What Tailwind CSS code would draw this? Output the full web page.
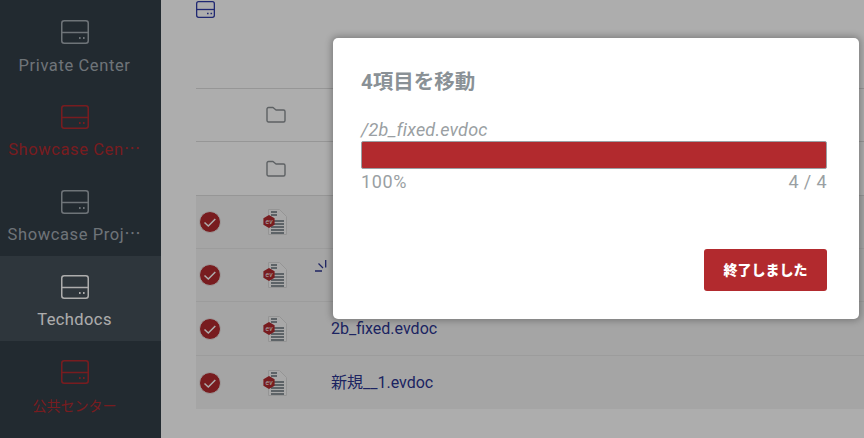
<!DOCTYPE html>
<html lang="ja">
<head>
    <meta charset="UTF-8">
    <title>Techdocs</title>
    <script src="https://cdn.jsdelivr.net/npm/@tailwindcss/browser@4"></script>
</head>
<body class="font-['Roboto','Noto_Sans_CJK_JP',sans-serif] overflow-hidden">

    <div class="relative flex w-[864px] h-[438px] overflow-hidden bg-white">

        <!-- Sidebar -->
        <aside class="w-[161px] h-full shrink-0 pt-px bg-[#333e48] text-[16.5px] tracking-[0.6px] leading-5">
            <div class="h-[85px] flex flex-col items-center pt-[19px] pr-3 text-[#a3abb2]">
                <svg class="w-7 h-6" viewBox="0 0 28 24" fill="none" stroke="currentColor" stroke-width="1.5"><rect x="0.75" y="0.75" width="26.5" height="22.5" rx="2.5"/><path d="M1 12.5h26"/><path d="M18 18h1.6M22 18h1.6" stroke-width="2"/></svg>
                <span class="mt-[12px]">Private Center</span>
            </div>
            <div class="h-[85px] flex flex-col items-center pt-[19px] pr-3 text-[#b22a2e]">
                <svg class="w-7 h-6" viewBox="0 0 28 24" fill="none" stroke="currentColor" stroke-width="1.5"><rect x="0.75" y="0.75" width="26.5" height="22.5" rx="2.5"/><path d="M1 12.5h26"/><path d="M18 18h1.6M22 18h1.6" stroke-width="2"/></svg>
                <span class="mt-[11px] whitespace-nowrap">Showcase Cen⋯</span>
            </div>
            <div class="h-[85px] flex flex-col items-center pt-[19px] pr-3 text-[#a3abb2]">
                <svg class="w-7 h-6" viewBox="0 0 28 24" fill="none" stroke="currentColor" stroke-width="1.5"><rect x="0.75" y="0.75" width="26.5" height="22.5" rx="2.5"/><path d="M1 12.5h26"/><path d="M18 18h1.6M22 18h1.6" stroke-width="2"/></svg>
                <span class="mt-[11px] whitespace-nowrap">Showcase Proj⋯</span>
            </div>
            <div class="h-[85px] flex flex-col items-center pt-[19px] pr-3 bg-[#455059] text-white">
                <svg class="w-7 h-6" viewBox="0 0 28 24" fill="none" stroke="currentColor" stroke-width="1.5"><rect x="0.75" y="0.75" width="26.5" height="22.5" rx="2.5"/><path d="M1 12.5h26"/><path d="M18 18h1.6M22 18h1.6" stroke-width="2"/></svg>
                <span class="mt-[11px] tracking-[0.4px]">Techdocs</span>
            </div>
            <div class="h-[85px] flex flex-col items-center pt-[19px] pr-3 text-[#b22a2e]">
                <svg class="w-7 h-6" viewBox="0 0 28 24" fill="none" stroke="currentColor" stroke-width="1.5"><rect x="0.75" y="0.75" width="26.5" height="22.5" rx="2.5"/><path d="M1 12.5h26"/><path d="M18 18h1.6M22 18h1.6" stroke-width="2"/></svg>
                <span class="mt-[12px] text-[14px] tracking-normal">公共センター</span>
            </div>
        </aside>

        <!-- Main -->
        <main class="flex-1 pl-[35px] text-[16px] text-[#2b3590]">
            <svg class="block w-[19px] h-[17px] mt-px" viewBox="0 0 19 17" fill="none" stroke="#2f3ba8" stroke-width="1.3"><rect x="0.65" y="0.65" width="17.7" height="15.7" rx="2"/><path d="M1 8.5h17"/><path d="M11 12.5h1.6M14.5 12.5h1.6" stroke-width="1.6"/></svg>

            <div class="mt-[70px] border-t border-[#dedede]">
                <div class="h-[53px] flex items-center border-b border-[#dedede]">
                    <svg class="ml-[70px] w-5 h-[18px]" viewBox="0 0 20 18" fill="none" stroke="#8a8f93" stroke-width="1.4" stroke-linejoin="round"><path d="M1 3a1.5 1.5 0 0 1 1.5-1.5h4.5l3 2.5h7.5a1.5 1.5 0 0 1 1.5 1.5v9a1.5 1.5 0 0 1-1.5 1.5h-15a1.5 1.5 0 0 1-1.5-1.5z"/></svg>
                </div>
                <div class="h-[54px] flex items-center border-b border-[#dedede]">
                    <svg class="ml-[70px] w-5 h-[18px]" viewBox="0 0 20 18" fill="none" stroke="#8a8f93" stroke-width="1.4" stroke-linejoin="round"><path d="M1 3a1.5 1.5 0 0 1 1.5-1.5h4.5l3 2.5h7.5a1.5 1.5 0 0 1 1.5 1.5v9a1.5 1.5 0 0 1-1.5 1.5h-15a1.5 1.5 0 0 1-1.5-1.5z"/></svg>
                </div>

                <!-- Selected rows -->
                <div class="bg-[#f4f4f4]">
                    <div class="h-[53px] flex items-center border-b border-[#e6e6e6]">
                        <svg class="ml-[3px] w-[22px] h-[22px]" viewBox="0 0 22 22"><circle cx="11" cy="11" r="10.5" fill="#b22a2e" stroke="#e8e8e8" stroke-width="1"/><path d="M5.5 11.5l3.8 3.5 7-7" fill="none" stroke="#fff" stroke-width="1.5"/></svg>
                        <svg class="ml-[42px] w-[24px] h-[26px]" viewBox="0 0 24 26"><path d="M5.5 0.5h11l7 7v18h-18z" fill="#f8f8f8" stroke="#dcdcdc"/><path d="M8 3h6M8 6h6M8 12h13M8 15h13M8 18h13M8 21h13M8 24h13" stroke="#66707a" stroke-width="1.4"/><path d="M6 6l5.6 3.2v6.6L6 19l-5.6-3.2V9.2z" fill="#b22a2e"/><text x="6" y="14.5" font-size="7" font-style="italic" text-anchor="middle" fill="#f4f4f4">ev</text></svg>
                    </div>
                    <div class="h-[53px] flex items-center border-b border-[#e6e6e6]">
                        <svg class="ml-[3px] w-[22px] h-[22px]" viewBox="0 0 22 22"><circle cx="11" cy="11" r="10.5" fill="#b22a2e" stroke="#e8e8e8" stroke-width="1"/><path d="M5.5 11.5l3.8 3.5 7-7" fill="none" stroke="#fff" stroke-width="1.5"/></svg>
                        <svg class="ml-[42px] w-[24px] h-[26px]" viewBox="0 0 24 26"><path d="M5.5 0.5h11l7 7v18h-18z" fill="#f8f8f8" stroke="#dcdcdc"/><path d="M8 3h6M8 6h6M8 12h13M8 15h13M8 18h13M8 21h13M8 24h13" stroke="#66707a" stroke-width="1.4"/><path d="M6 6l5.6 3.2v6.6L6 19l-5.6-3.2V9.2z" fill="#b22a2e"/><text x="6" y="14.5" font-size="7" font-style="italic" text-anchor="middle" fill="#f4f4f4">ev</text></svg>
                        <svg class="ml-[28px] -mt-[18px] w-[12px] h-[12px]" viewBox="0 0 12 12" fill="none" stroke="#2b3590" stroke-width="1.3"><path d="M0 11h7M3.5 3.5l4.5 4.5M10.7 0v7.5"/></svg>
                    </div>
                    <div class="h-[54px] flex items-center border-b border-[#e6e6e6]">
                        <svg class="ml-[3px] w-[22px] h-[22px]" viewBox="0 0 22 22"><circle cx="11" cy="11" r="10.5" fill="#b22a2e" stroke="#e8e8e8" stroke-width="1"/><path d="M5.5 11.5l3.8 3.5 7-7" fill="none" stroke="#fff" stroke-width="1.5"/></svg>
                        <svg class="ml-[42px] w-[24px] h-[26px]" viewBox="0 0 24 26"><path d="M5.5 0.5h11l7 7v18h-18z" fill="#f8f8f8" stroke="#dcdcdc"/><path d="M8 3h6M8 6h6M8 12h13M8 15h13M8 18h13M8 21h13M8 24h13" stroke="#66707a" stroke-width="1.4"/><path d="M6 6l5.6 3.2v6.6L6 19l-5.6-3.2V9.2z" fill="#b22a2e"/><text x="6" y="14.5" font-size="7" font-style="italic" text-anchor="middle" fill="#f4f4f4">ev</text></svg>
                        <span class="ml-[44px]">2b_fixed.evdoc</span>
                    </div>
                    <div class="h-[53px] flex items-center">
                        <svg class="ml-[3px] w-[22px] h-[22px]" viewBox="0 0 22 22"><circle cx="11" cy="11" r="10.5" fill="#b22a2e" stroke="#e8e8e8" stroke-width="1"/><path d="M5.5 11.5l3.8 3.5 7-7" fill="none" stroke="#fff" stroke-width="1.5"/></svg>
                        <svg class="ml-[42px] w-[24px] h-[26px]" viewBox="0 0 24 26"><path d="M5.5 0.5h11l7 7v18h-18z" fill="#f8f8f8" stroke="#dcdcdc"/><path d="M8 3h6M8 6h6M8 12h13M8 15h13M8 18h13M8 21h13M8 24h13" stroke="#66707a" stroke-width="1.4"/><path d="M6 6l5.6 3.2v6.6L6 19l-5.6-3.2V9.2z" fill="#b22a2e"/><text x="6" y="14.5" font-size="7" font-style="italic" text-anchor="middle" fill="#f4f4f4">ev</text></svg>
                        <span class="ml-[44px]">新規__1.evdoc</span>
                    </div>
                </div>
            </div>
        </main>

        <!-- Overlay -->
        <div class="absolute inset-0 bg-black/32"></div>

        <!-- Dialog -->
        <div class="absolute left-[333px] top-[38px] w-[526px] h-[281px] flex flex-col pl-[28px] pr-[32px] pt-[32px] rounded-[5px] bg-white shadow-[0_0_6px_2px_rgba(0,0,0,0.25)]">
            <h2 class="text-[20.5px] leading-6 font-bold text-[#8a9196]">4項目を移動</h2>
            <p class="mt-[24px] text-[18px] leading-[23px] tracking-[0.2px] italic text-[#9a9fa3]">/2b_fixed.evdoc</p>
            <div class="h-[28px] rounded-[2px] border border-[#9aa0a5] bg-[#b22a2e]"></div>
            <div class="flex justify-between mt-px text-[18px] leading-6 text-[#9a9fa3]">
                <span class="tracking-[0.6px]">100%</span>
                <span class="tracking-[0.4px]">4 / 4</span>
            </div>
            <div class="flex justify-end mt-[55px]">
                <button class="w-[123px] h-[42px] rounded-[3px] bg-[#b22a2e] text-[14px] font-black text-white">終了しました</button>
            </div>
        </div>
    </div>

</body>
</html>
